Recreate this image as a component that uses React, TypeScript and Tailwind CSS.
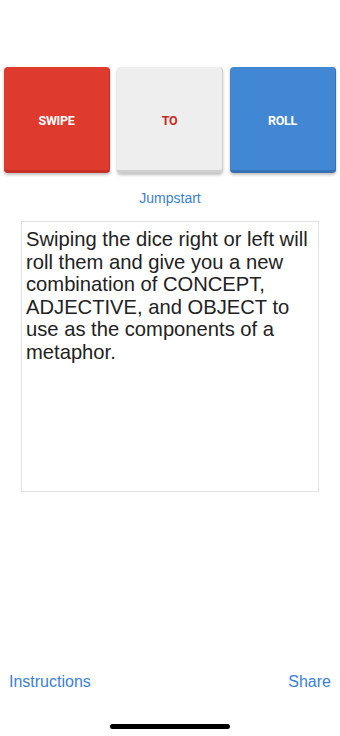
const dice = [
  { label: "SWIPE", box: "bg-[#df3a2e] border-[#c52f25]", text: "text-white" },
  { label: "TO", box: "bg-[#eeeeee] border-[#cfcfcf]", text: "text-[#c42b22]" },
  { label: "ROLL", box: "bg-[#4187d3] border-[#3570b3]", text: "text-white" },
];

export default function App() {
  return (
    <div className="h-[736px] w-[340px] bg-white flex flex-col font-['Liberation_Sans',Arial,sans-serif] overflow-hidden">
      {/* Dice */}
      <div className="mt-[67px] px-[4px] flex gap-[7px]">
        {dice.map((d) => (
          <div
            key={d.label}
            className={`w-[106px] h-[106px] rounded-[4px] border-b-[3px] border-r ${d.box} shadow-[0_2px_3px_rgba(0,0,0,0.25)] flex items-center justify-center pt-[5px]`}
          >
            <span className={`font-['Roboto',sans-serif] font-bold text-[12.5px] tracking-[-0.3px] ${d.text}`}>
              {d.label}
            </span>
          </div>
        ))}
      </div>

      <div className="mt-[15px] text-center text-[14px] leading-[20px] text-[#3b80d8]">Jumpstart</div>

      {/* Description */}
      <div className="mt-[13px] mx-[21px] h-[271px] border border-[#e2e2e2] px-[4px] pt-[6px]">
        <p className="text-[20.2px] leading-[22.6px] text-[#222222]">
          Swiping the dice right or left will roll them and give you a new combination of CONCEPT, ADJECTIVE, and OBJECT to use as the components of a metaphor.
        </p>
      </div>

      <div className="flex-1" />

      <div className="px-[9px] flex justify-between text-[16px] leading-[20px] text-[#3b80d8]">
        <span>Instructions</span>
        <span>Share</span>
      </div>

      <div className="mt-[32px] mb-[7px] flex justify-center">
        <div className="w-[120px] h-[5px] rounded-full bg-black" />
      </div>
    </div>
  );
}
